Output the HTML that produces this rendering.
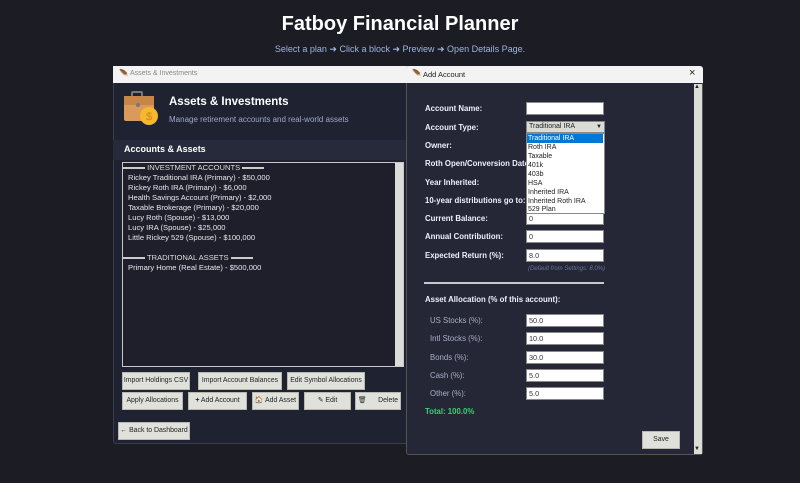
<!DOCTYPE html>
<html><head><meta charset="utf-8"><style>
*{margin:0;padding:0;box-sizing:border-box}
body{width:800px;height:483px;background:#1c1c25;font-family:"Liberation Sans",sans-serif;position:relative;overflow:hidden;color:#e8e8ee}
.a{position:absolute;white-space:nowrap}
.btn{position:absolute;background:#e1e1dc;border:1px solid #b8b8b0;color:#222;font-size:6.9px;text-align:center;line-height:16px;height:18px;white-space:nowrap;overflow:hidden}
.inp{position:absolute;background:#fff;border:1px solid #888;height:13px;left:526px;width:78px;font-size:7.3px;color:#333;padding-left:2px;line-height:11px}
.lbl{position:absolute;left:425px;font-size:7.8px;font-weight:bold;color:#eef}
.al{position:absolute;left:430px;font-size:7.8px;color:#a8aec0}
.li{position:absolute;left:128px;font-size:7.6px;color:#e8e8ee}
.dd{position:absolute;left:527px;font-size:7px;color:#222;width:76px;padding-left:1px;height:9px;line-height:9px}
.sep{display:inline-block;width:30px;height:2px;background:#ccc;vertical-align:middle}
</style></head><body>
<div class="a" style="left:0;width:800px;top:13px;text-align:center;font-size:20px;font-weight:bold;color:#fff">Fatboy Financial Planner</div>
<div class="a" style="left:0;width:800px;top:44px;text-align:center;font-size:9px;color:#9db4e0">Select a plan ➜ Click a block ➜ Preview ➜ Open Details Page.</div>

<!-- left window -->
<div class="a" style="left:113px;top:66px;width:300px;height:378px;background:#1f2231;border:1px solid #3a3d4c;border-radius:3px"></div>
<div class="a" style="left:113px;top:66px;width:300px;height:17px;background:#f3f3f3"></div>
<div class="a" style="left:119px;top:69px;font-size:8px;color:#555">&#x1FAB6;</div>
<div class="a" style="left:130px;top:70px;font-size:7px;color:#888">Assets &amp; Investments</div>
<svg class="a" style="left:123px;top:91px" width="36" height="36" viewBox="0 0 36 36">
<rect x="9" y="1" width="10" height="6" rx="1" fill="none" stroke="#777" stroke-width="2"/>
<rect x="1" y="5" width="30" height="25" rx="2" fill="#d99a5c"/>
<rect x="1" y="5" width="30" height="9" fill="#c88548"/>
<circle cx="15" cy="14" r="2" fill="#777"/>
<circle cx="26" cy="25" r="9" fill="#f5b82e"/>
<text x="26" y="29" font-size="11" text-anchor="middle" fill="#d08a10" font-family="Liberation Sans">$</text>
</svg>
<div class="a" style="left:169px;top:96px;font-size:11.5px;font-weight:bold;color:#fff">Assets &amp; Investments</div>
<div class="a" style="left:169px;top:115px;font-size:8px;color:#a0a8c4">Manage retirement accounts and real-world assets</div>
<div class="a" style="left:113px;top:140px;width:295px;height:20px;background:#272a3a"></div>
<div class="a" style="left:124px;top:144px;font-size:9px;font-weight:bold;color:#fff">Accounts &amp; Assets</div>
<div class="a" style="left:122px;top:162px;width:282px;height:205px;background:#1e1f2a;border:1px solid #c8c8c8"></div>
<div class="a" style="left:395px;top:163px;width:8px;height:203px;background:#dcdcd8"></div>
<div class="li" style="top:163px;left:123px;color:#ddd"><span class="sep" style="width:22px"></span> INVESTMENT ACCOUNTS <span class="sep" style="width:22px"></span></div>
<div class="li" style="top:173px">Rickey Traditional IRA (Primary) - $50,000</div>
<div class="li" style="top:183px">Rickey Roth IRA (Primary) - $6,000</div>
<div class="li" style="top:193px">Health Savings Account (Primary) - $2,000</div>
<div class="li" style="top:203px">Taxable Brokerage (Primary) - $20,000</div>
<div class="li" style="top:213px">Lucy Roth (Spouse) - $13,000</div>
<div class="li" style="top:223px">Lucy IRA (Spouse) - $25,000</div>
<div class="li" style="top:233px">Little Rickey 529 (Spouse) - $100,000</div>
<div class="li" style="top:253px;left:123px;color:#ddd"><span class="sep" style="width:22px"></span> TRADITIONAL ASSETS <span class="sep" style="width:22px"></span></div>
<div class="li" style="top:263px">Primary Home (Real Estate) - $500,000</div>
<div class="btn" style="left:122px;top:372px;width:68px">Import Holdings CSV</div>
<div class="btn" style="left:198px;top:372px;width:84px">Import Account Balances</div>
<div class="btn" style="left:287px;top:372px;width:78px">Edit Symbol Allocations</div>
<div class="btn" style="left:122px;top:392px;width:61px">Apply Allocations</div>
<div class="btn" style="left:188px;top:392px;width:59px"><b>+</b> Add Account</div>
<div class="btn" style="left:252px;top:392px;width:47px">🏠 Add Asset</div>
<div class="btn" style="left:304px;top:392px;width:47px">✎ Edit</div>
<div class="btn" style="left:355px;top:392px;width:46px">🗑&nbsp;&nbsp;&nbsp;&nbsp;&nbsp; Delete</div>
<div class="btn" style="left:118px;top:422px;width:72px">← Back to Dashboard</div>

<!-- dialog -->
<div class="a" style="left:406px;top:66px;width:297px;height:389px;border:1px solid #555;border-radius:3px;background:#252737"></div>
<div class="a" style="left:406px;top:66px;width:297px;height:17px;background:#f3f3f3;border-radius:3px 3px 0 0"></div>
<div class="a" style="left:412px;top:69px;font-size:8px;color:#555">&#x1FAB6;</div>
<div class="a" style="left:423px;top:70px;font-size:7.5px;color:#222">Add Account</div>
<div class="a" style="left:689px;top:67px;font-size:11px;color:#222">×</div>
<div class="a" style="left:694px;top:84px;width:8px;height:370px;background:#dcdcd8"></div>
<div class="a" style="left:694px;top:84px;font-size:6px;color:#222">▲</div>
<div class="a" style="left:694px;top:446px;font-size:6px;color:#222">▼</div>

<div class="lbl" style="top:104px">Account Name:</div>
<div class="lbl" style="top:123px">Account Type:</div>
<div class="lbl" style="top:141px">Owner:</div>
<div class="lbl" style="top:159px">Roth Open/Conversion Date:</div>
<div class="lbl" style="top:178px">Year Inherited:</div>
<div class="lbl" style="top:196px">10-year distributions go to:</div>
<div class="lbl" style="top:214px">Current Balance:</div>
<div class="lbl" style="top:232px">Annual Contribution:</div>
<div class="lbl" style="top:251px">Expected Return (%):</div>
<div class="inp" style="top:102px"></div>
<div class="inp" style="top:212px">0</div>
<div class="inp" style="top:230px">0</div>
<div class="inp" style="top:249px">8.0</div>
<div class="a" style="left:526px;top:121px;width:79px;height:12px;background:#dcdcd6;border:1px solid #888;font-size:7px;color:#222;padding-left:2px;line-height:10px">Traditional IRA<span style="position:absolute;right:2px;font-size:6px">▼</span></div>
<div class="a" style="left:526px;top:133px;width:79px;height:81px;background:#fff;border:1px solid #888"></div>
<div class="dd" style="top:134px;background:#0078d7;color:#fff">Traditional IRA</div>
<div class="dd" style="top:143px">Roth IRA</div>
<div class="dd" style="top:152px">Taxable</div>
<div class="dd" style="top:161px">401k</div>
<div class="dd" style="top:170px">403b</div>
<div class="dd" style="top:179px">HSA</div>
<div class="dd" style="top:188px">Inherited IRA</div>
<div class="dd" style="top:197px">Inherited Roth IRA</div>
<div class="dd" style="top:205px">529 Plan</div>
<div class="a" style="left:528px;top:266px;font-size:6px;font-style:italic;color:#6a7498">(Default from Settings: 8.0%)</div>
<div class="a" style="left:424px;top:282px;width:180px;height:2px;background:#c8c8c8"></div>
<div class="lbl" style="top:295px">Asset Allocation (% of this account):</div>
<div class="al" style="top:316px">US Stocks (%):</div>
<div class="al" style="top:334px">Intl Stocks (%):</div>
<div class="al" style="top:353px">Bonds (%):</div>
<div class="al" style="top:371px">Cash (%):</div>
<div class="al" style="top:389px">Other (%):</div>
<div class="inp" style="top:314px">50.0</div>
<div class="inp" style="top:332px">10.0</div>
<div class="inp" style="top:351px">30.0</div>
<div class="inp" style="top:369px">5.0</div>
<div class="inp" style="top:387px">5.0</div>
<div class="a" style="left:425px;top:407px;font-size:7.8px;font-weight:bold;color:#3ed070">Total: 100.0%</div>
<div class="btn" style="left:642px;top:431px;width:38px">Save</div>
</body></html>
